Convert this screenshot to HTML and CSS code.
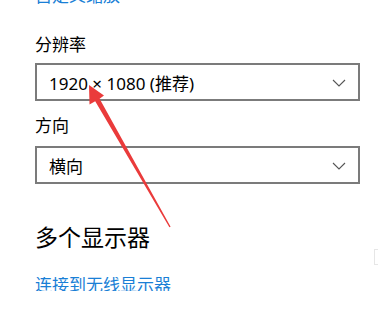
FILE: index.html
```html
<!DOCTYPE html>
<html lang="zh-CN">
<head>
<meta charset="utf-8">
<link rel="stylesheet" href="styles.css">
</head>
<body>
<div class="page">
  <a class="link top-link">自定义缩放</a>
  <div class="label">分辨率</div>
  <div class="select"><span>1920 × 1080 (推荐)</span><svg class="chev" width="14" height="8" viewBox="0 0 14 8"><path d="M1 1 L7 7 L13 1" fill="none" stroke="#555" stroke-width="1.1"/></svg></div>
  <div class="label label-2">方向</div>
  <div class="select select-2"><span>横向</span><svg class="chev" width="14" height="8" viewBox="0 0 14 8"><path d="M1 1 L7 7 L13 1" fill="none" stroke="#555" stroke-width="1.1"/></svg></div>
  <h2 class="heading">多个显示器</h2>
  <div class="clip"><a class="link">连接到无线显示器</a></div>
  <div class="scroll-mark"></div>
  <svg class="arrow" width="378" height="321" viewBox="0 0 378 321"><polygon points="89,85 104,95.5 99.6,98.8 170.6,226.8 169.4,227.2 95.2,101.2 89.5,104.5" fill="#ea3b3b"/></svg>
</div>
</body>
</html>
```
FILE: styles.css
```css
html, body { margin: 0; padding: 0; background: #fff; }
.page {
  position: relative;
  width: 378px;
  height: 321px;
  overflow: hidden;
  padding: 0 18px 0 35px;
  box-sizing: border-box;
  font-family: "Noto Sans", "Noto Sans CJK SC", sans-serif;
  color: #000;
}
.link {
  display: block;
  color: #1a7fd6;
  font-size: 17px;
  line-height: 24px;
  text-decoration: none;
}
.top-link { margin-top: -16px; }
.label {
  font-size: 17px;
  line-height: 24px;
  margin-top: 25px;
}
.label-2 { margin-top: 13px; }
.select {
  margin-top: 6px;
  height: 38px;
  box-sizing: border-box;
  border: 2px solid #7b7b7b;
  display: flex;
  align-items: center;
  justify-content: space-between;
  padding: 0 12px 0 12px;
  font-size: 17px;
}
.select-2 { margin-top: 8px; }
.chev { display: block; margin-top: 1px; }
.heading {
  margin: 38px 0 0 0;
  font-size: 23px;
  line-height: 30px;
  font-weight: normal;
}
.clip {
  margin-top: 25px;
  height: 14px;
  overflow: hidden;
}
.clip .link { line-height: 22px; margin-top: -3px; }
.scroll-mark {
  position: absolute;
  right: 0;
  top: 249px;
  width: 3px;
  height: 14px;
  border: 1px solid #e6e6e6;
  border-right: none;
}
.arrow { position: absolute; left: 0; top: 0; pointer-events: none; }
```
